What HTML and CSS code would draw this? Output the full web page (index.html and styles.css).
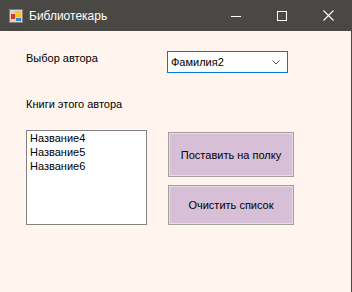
FILE: index.html
```html
<!DOCTYPE html>
<html lang="ru">
<head>
  <meta charset="UTF-8">
  <title>Библиотекарь</title>
  <link rel="stylesheet" href="styles.css">
</head>
<body>

  <div class="window">
    <div class="titlebar">
      <svg class="app-icon" width="14" height="14" viewBox="0 0 14 14">
        <rect x="0.5" y="0.5" width="13" height="13" fill="#d9d4c8" stroke="#8a8478"/>
        <rect x="2" y="5" width="4" height="5" fill="#d23a2a"/>
        <rect x="6" y="2" width="6" height="6" fill="#f2c230"/>
        <rect x="7" y="9" width="5" height="3" fill="#3a7fd0"/>
      </svg>
      <span class="title">Библиотекарь</span>
      <div class="caption">
        <div class="caption-btn">
          <svg width="10" height="10" viewBox="0 0 10 10"><path d="M0 5.5h10" stroke="#fff" stroke-width="1"/></svg>
        </div>
        <div class="caption-btn">
          <svg width="10" height="10" viewBox="0 0 10 10"><rect x="0.5" y="0.5" width="9" height="9" fill="none" stroke="#fff"/></svg>
        </div>
        <div class="caption-btn">
          <svg width="11" height="11" viewBox="0 0 11 11"><path d="M0.5 0.5l10 10M10.5 0.5l-10 10" stroke="#fff" stroke-width="1.1"/></svg>
        </div>
      </div>
    </div>

    <div class="client">
      <div class="author-row">
        <span class="label">Выбор автора</span>
        <div class="combo">
          <span>Фамилия2</span>
          <svg class="chevron" width="8" height="5" viewBox="0 0 8 5"><path d="M0.5 0.5l3.5 3.5 3.5-3.5" fill="none" stroke="#555" stroke-width="1"/></svg>
        </div>
      </div>

      <div class="label books-label">Книги этого автора</div>

      <div class="books-row">
        <div class="listbox">
          <div>Название4</div>
          <div>Название5</div>
          <div>Название6</div>
        </div>
        <div class="actions">
          <button class="btn-tall">Поставить на полку</button>
          <button class="btn-short">Очистить список</button>
        </div>
      </div>
    </div>
  </div>

</body>
</html>
```

FILE: styles.css
```css
body {
  margin: 0;
  font-family: 'Liberation Sans', Arial, sans-serif;
  font-size: 11px;
  color: #000;
}
.window {
  width: 352px;
  height: 292px;
  display: flex;
  flex-direction: column;
}
.titlebar {
  height: 31px;
  background: #4a4845;
  color: #fff;
  display: flex;
  align-items: center;
  flex-shrink: 0;
}
.app-icon {
  margin-left: 9px;
}
.title {
  margin-left: 6px;
  font-size: 12px;
}
.caption {
  margin-left: auto;
  margin-right: 1px;
  display: flex;
}
.caption-btn {
  width: 46px;
  height: 31px;
  display: flex;
  align-items: center;
  justify-content: center;
}
.client {
  flex: 1;
  background: #fff5ee;
  border-right: 1px solid #4a4845;
  padding: 20px 0 0 26px;
}
.label {
  line-height: 13px;
}
.author-row {
  display: flex;
  align-items: flex-start;
}
.author-row .label {
  width: 141px;
  margin-top: 1px;
}
.combo {
  width: 121px;
  height: 22px;
  box-sizing: border-box;
  border: 1px solid #0078d7;
  background: #fff;
  display: flex;
  align-items: center;
  padding-left: 3px;
}
.chevron {
  margin-left: auto;
  margin-right: 7px;
}
.books-label {
  margin-top: 25px;
}
.books-row {
  margin-top: 19px;
  display: flex;
  align-items: flex-start;
}
.listbox {
  width: 121px;
  height: 95px;
  box-sizing: border-box;
  border: 1px solid #828282;
  background: #fff;
  padding: 0 3px;
  line-height: 14px;
}
.actions {
  margin-left: 21px;
  margin-top: 2px;
  display: flex;
  flex-direction: column;
  gap: 8px;
}
.actions button {
  width: 126px;
  padding: 0;
  background: #d8bfd8;
  border: 1px solid #a0a0a0;
  box-shadow: inset 0 0 0 1px #e6dce6;
  font-family: inherit;
  font-size: 11px;
  color: #000;
}
.btn-tall {
  height: 45px;
}
.btn-short {
  height: 40px;
}
```
